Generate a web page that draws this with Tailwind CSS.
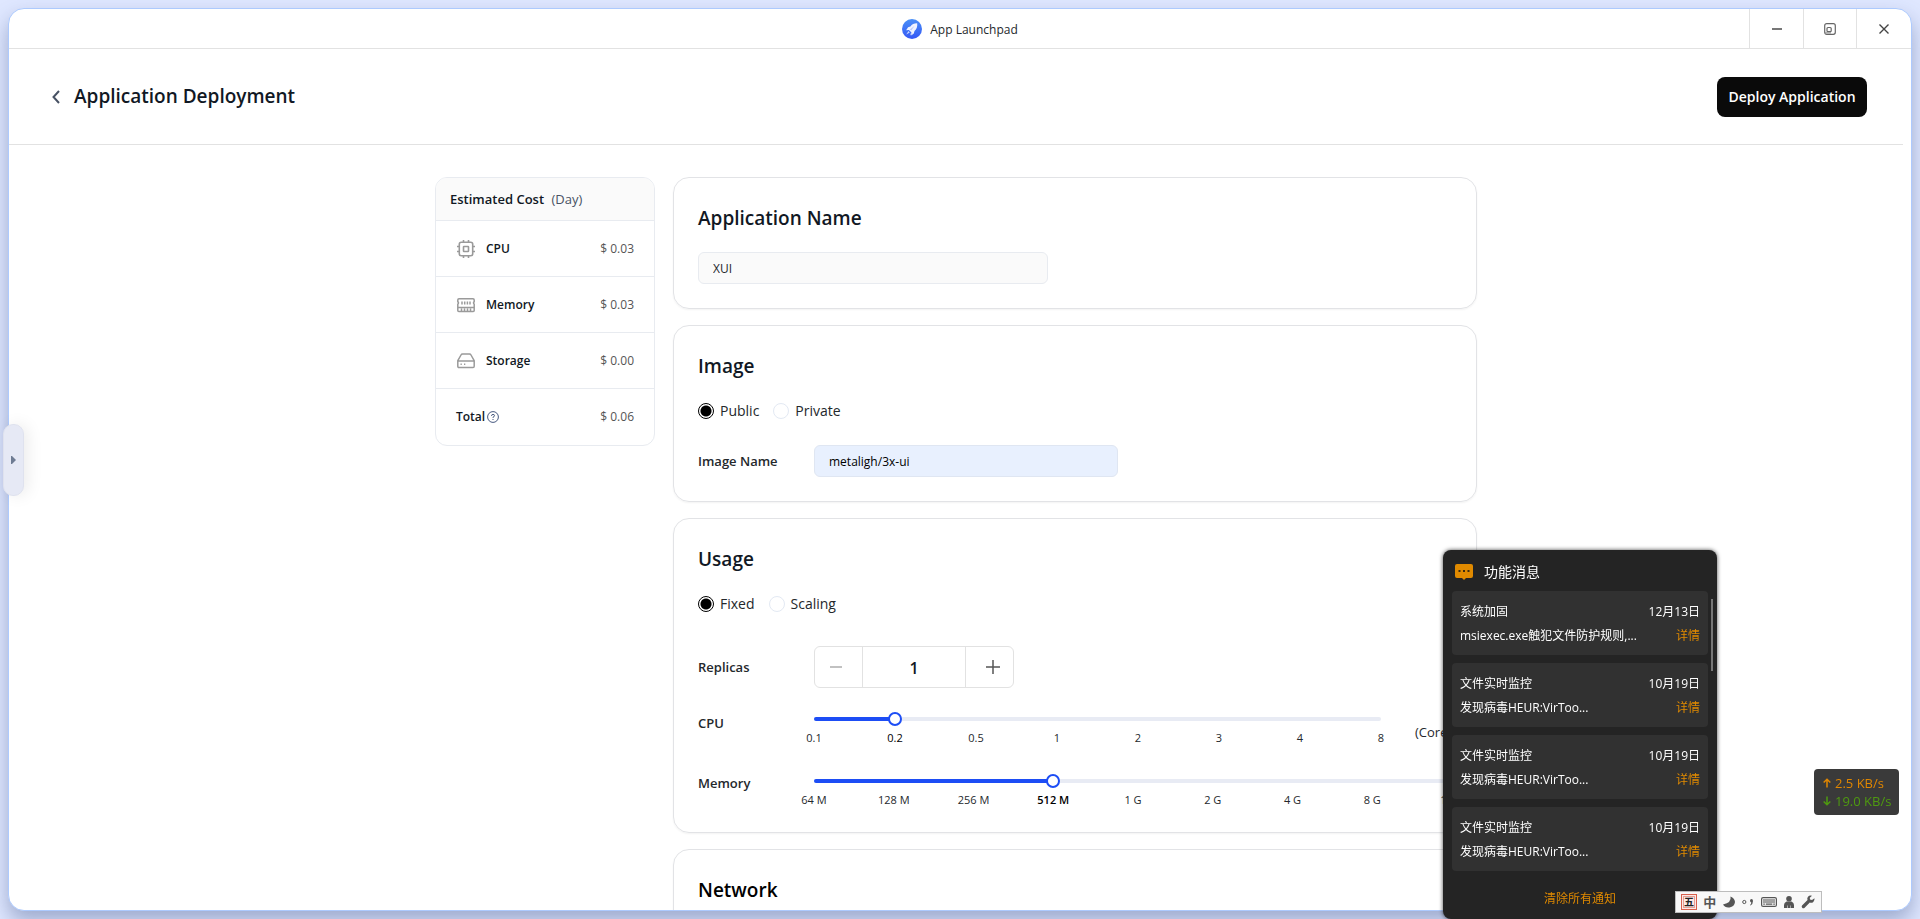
<!DOCTYPE html>
<html lang="en">
<head>
<meta charset="utf-8">
<meta name="viewport" content="width=device-width, initial-scale=1">
<title>App Launchpad</title>
<script src="https://cdn.jsdelivr.net/npm/@tailwindcss/browser@4"></script>
</head>
<body class="h-screen overflow-hidden bg-[#dfe7ff] p-2 font-['Open_Sans','Noto_Sans','Noto_Sans_CJK_SC',sans-serif] text-[#111824]">

<div class="flex h-full flex-col overflow-hidden rounded-2xl border border-[#adcafe] bg-white shadow-[0_10px_20px_rgba(60,80,130,0.4)]">
  <!-- window title bar -->
  <div class="grid h-10 shrink-0 grid-cols-[1fr_auto_1fr] border-b border-[#e2e2e2]">
    <span></span>
    <div class="flex items-center gap-2 text-xs text-[#24282c]">
      <svg class="size-5" viewBox="0 0 20 20" aria-hidden="true">
        <defs><linearGradient id="lg" x1="0" y1="0" x2="0" y2="1"><stop offset="0" stop-color="#4a90f7"/><stop offset="1" stop-color="#3457f5"/></linearGradient></defs>
        <circle cx="10" cy="10" r="10" fill="url(#lg)"/>
        <path d="M15.200 4.200c-3-.1-5.200 1-6.800 3.300l-2.300.7-2 3 2.800-.2 2.600 2.500-.3 2.900 2.600-1.900.7-2.400c2.200-1.800 3.100-4.500 2.700-7.800z" fill="#eef3ff"/>
        <path d="M6.500 12 4.200 15.500l3.600-1.900zM9 13.600l-.8 3 2.600-2.300z" fill="#c8d6ff"/>
        <path d="M8 10.600l4.600-3.900-3.400 4.900z" fill="#b5c6fb"/>
      </svg>
      <span class="pt-0.5">App Launchpad</span>
    </div>
    <div class="flex justify-end text-[#555]">
      <button type="button" aria-label="Minimize" class="flex w-[54px] items-center justify-center border-l border-[#e2e2e2]">
        <svg class="h-3 w-3" viewBox="0 0 12 12"><path d="M1 6h10" stroke="#777" stroke-width="2" /></svg>
      </button>
      <button type="button" aria-label="Restore" class="flex w-[53px] items-center justify-center border-l border-[#e2e2e2]">
        <svg class="h-3 w-3" viewBox="0 0 12 12" fill="none" stroke="#666" stroke-width="1.200"><rect x=".7" y=".7" width="10.600" height="10.600" rx="2"/><rect x="3" y="4.500" width="4.200" height="4.200" rx="1"/><path d="M1 9.800h6" stroke="#999"/></svg>
      </button>
      <button type="button" aria-label="Close" class="flex w-[55px] items-center justify-center border-l border-[#e2e2e2]">
        <svg class="h-3 w-3" viewBox="0 0 12 12"><path d="M1.500 1.500l9 9M10.500 1.500l-9 9" stroke="#444" stroke-width="1.400"/></svg>
      </button>
    </div>
  </div>

  <div class="mr-2 flex min-h-0 flex-1 flex-col overflow-hidden">
    <!-- page header -->
    <header class="flex h-24 shrink-0 items-center justify-between border-b border-[#e2e2e2] pr-9 pl-[35px]">
      <div class="flex items-center gap-1.5">
        <button type="button" aria-label="Back" class="flex size-6 items-center justify-center">
          <svg class="h-4 w-3" viewBox="0 0 12 16" fill="none"><path d="M9 2 3.500 8 9 14" stroke="#485264" stroke-width="2"/></svg>
        </button>
        <h1 class="text-[19px] font-semibold">Application Deployment</h1>
      </div>
      <button type="button" class="h-10 w-[150px] rounded-lg bg-[#0a0a0a] text-sm font-semibold whitespace-nowrap text-white">Deploy Application</button>
    </header>

    <main class="min-h-0 flex-1 overflow-hidden pt-8">
      <div class="mx-auto flex max-w-[1042px] items-start gap-[18px]">
        <!-- cost table -->
        <table aria-label="Estimated cost per day" class="w-[220px] shrink-0 border-separate border-spacing-0 overflow-hidden rounded-xl border border-[#e8ebf0] text-xs">
          <thead>
            <tr><th colspan="2" class="h-[43px] border-b border-[#e8ebf0] bg-[#fafafa] px-3.5 pt-0.5 text-left text-[13px] font-semibold">Estimated Cost <span class="ml-1 font-normal text-[#485264]">(Day)</span></th></tr>
          </thead>
          <tbody>
            <tr>
              <th scope="row" class="h-14 border-b border-[#e8ebf0] pl-[21px] text-left font-semibold">
                <span class="flex items-center gap-[11px]">
                  <svg class="h-[18px] w-[18px]" viewBox="0 0 18 18" fill="none" stroke="#9a9a9a" stroke-width="1.600"><rect x="2.300" y="2.300" width="13.400" height="13.400" rx="2"/><rect x="6.500" y="6.500" width="5" height="5" rx=".5"/><path d="M6.500 0v2.300M11.500 0v2.300M6.500 15.700V18M11.500 15.700V18M0 6.500h2.300M0 11.500h2.300M15.700 6.500H18M15.700 11.500H18"/></svg>CPU</span>
              </th>
              <td class="border-b border-[#e8ebf0] pr-5 text-right text-[#555]">$ 0.03</td>
            </tr>
            <tr>
              <th scope="row" class="h-14 border-b border-[#e8ebf0] pl-[21px] text-left font-semibold">
                <span class="flex items-center gap-[11px]">
                  <svg class="h-[18px] w-[18px]" viewBox="0 0 18 18" fill="none" stroke="#9a9a9a" stroke-width="1.500"><path d="M.8 5.800V4q0-1.200 1.200-1.200h14q1.200 0 1.200 1.200v1.800q-1.400.6 0 2.400v6.300q0 1-1 1H1.800q-1 0-1-1V8.200q1.400-1.800 0-2.400zM.8 11.500h16.400M5 5.500v3M7.700 5.500v3M10.400 5.500v3M13 5.500v3M4.500 12.500v3M7.500 12.500v3M10.500 12.500v3M13.500 12.500v3"/></svg>Memory</span>
              </th>
              <td class="border-b border-[#e8ebf0] pr-5 text-right text-[#555]">$ 0.03</td>
            </tr>
            <tr>
              <th scope="row" class="h-14 border-b border-[#e8ebf0] pl-[21px] text-left font-semibold">
                <span class="flex items-center gap-[11px]">
                  <svg class="h-[18px] w-[18px]" viewBox="0 0 18 18" fill="none" stroke="#9a9a9a" stroke-width="1.500"><path d="M.8 8.700 4 3q.5-.9 1.500-.9h7q1 0 1.500.9l3.200 5.700v5.600q0 1.300-1.200 1.300H2Q.8 15.600.8 14.300zM.8 8.900h16.400"/><path d="M3.500 12.300h1.300M7 12.300h1.300"/></svg>Storage</span>
              </th>
              <td class="border-b border-[#e8ebf0] pr-5 text-right text-[#555]">$ 0.00</td>
            </tr>
            <tr>
              <th scope="row" class="h-14 pl-5 text-left font-semibold">
                <span class="flex items-center gap-0.5">Total
                  <svg class="size-3" viewBox="0 0 12 12" fill="none" stroke="#485a80"><circle cx="6" cy="6" r="5.400"/><path d="M4.500 4.900q0-1.500 1.500-1.500t1.500 1.300q0 .9-1.500 1.500v.7M6 8v1"/></svg></span>
              </th>
              <td class="pr-5 text-right text-[#555]">$ 0.06</td>
            </tr>
          </tbody>
        </table>

        <form class="flex min-w-0 flex-1 flex-col gap-4">
          <section class="rounded-2xl border border-[#e2e3e6] p-6 shadow-xs">
            <h2 class="mb-[19px] pt-px text-[19px] leading-[30px] font-semibold"><label for="app">Application Name</label></h2>
            <input id="app" type="text" value="XUI" class="block h-8 w-[350px] rounded-md border border-[#e8ebf0] bg-[#fafafa] px-3.5 text-xs text-[#24282c]">
          </section>

          <section class="rounded-2xl border border-[#e2e3e6] p-6 shadow-xs">
            <h2 class="mb-[19px] pt-px text-[19px] leading-[30px] font-semibold">Image</h2>
            <div class="mb-6 flex h-[21px] items-center gap-3.5 text-sm text-[#24282c]">
              <label class="flex items-center gap-1.5"><input type="radio" name="img" checked class="size-4 appearance-none rounded-full border border-[#e3e9f3] checked:border-black checked:bg-[radial-gradient(circle,black_5px,white_6px)]">Public</label>
              <label class="flex items-center gap-1.5"><input type="radio" name="img" class="size-4 appearance-none rounded-full border border-[#e3e9f3] checked:border-black checked:bg-[radial-gradient(circle,black_5px,white_6px)]">Private</label>
            </div>
            <div class="flex items-center">
              <label for="image" class="w-[116px] shrink-0 pt-0.5 text-[13px] font-semibold text-[#24282c]">Image Name</label>
              <input id="image" type="text" value="metaligh/3x-ui" class="h-8 w-[304px] rounded-md border border-[#dfe6f2] bg-[#e8f0fe] px-3.5 text-xs text-black">
            </div>
          </section>

          <section class="rounded-2xl border border-[#e2e3e6] p-6 shadow-xs">
            <h2 class="mb-[19px] pt-px text-[19px] leading-[30px] font-semibold">Usage</h2>
            <div class="mb-8 flex h-[21px] items-center gap-3.5 text-sm text-[#24282c]">
              <label class="flex items-center gap-1.5"><input type="radio" name="use" checked class="size-4 appearance-none rounded-full border border-[#e3e9f3] checked:border-black checked:bg-[radial-gradient(circle,black_5px,white_6px)]">Fixed</label>
              <label class="flex items-center gap-1.5"><input type="radio" name="use" class="size-4 appearance-none rounded-full border border-[#e3e9f3] checked:border-black checked:bg-[radial-gradient(circle,black_5px,white_6px)]">Scaling</label>
            </div>
            <div class="flex items-center">
              <label for="rep" class="w-[116px] shrink-0 pt-0.5 text-[13px] font-semibold text-[#24282c]">Replicas</label>
              <div class="flex h-[42px] w-[200px] rounded-md border border-[#e2e2e2]">
                <button type="button" aria-label="Decrease" class="flex w-12 items-center justify-center border-r border-[#e2e2e2] pr-1.5"><svg class="h-3.5 w-3.5" viewBox="0 0 14 14"><path d="M1 7h12" stroke="#c1c1c1" stroke-width="2"/></svg></button>
                <input id="rep" type="text" inputmode="numeric" value="1" class="min-w-0 flex-1 pt-0.5 text-center text-base font-semibold">
                <button type="button" aria-label="Increase" class="flex w-12 items-center justify-center border-l border-[#e2e2e2] pl-1.5"><svg class="h-3.5 w-3.5" viewBox="0 0 14 14"><path d="M0 7h14M7 0v14" stroke="#555" stroke-width="1.500"/></svg></button>
              </div>
            </div>

            <div class="mt-[29px] flex h-9">
              <label for="cpu" class="-mt-1 w-[116px] shrink-0 text-[13px] leading-5 font-semibold text-[#24282c]">CPU</label>
              <div class="min-w-0 flex-1">
                <div class="relative h-1 rounded-full bg-[#e8ebf4]">
                  <div class="h-1 rounded-full bg-[#1d4df5]" style="width:14.286%"></div>
                  <input id="cpu" type="range" min="0" max="7" value="1" class="absolute -top-[5px] -left-[7px] h-3.5 w-[calc(100%+14px)] appearance-none bg-transparent [&::-webkit-slider-thumb]:size-3.5 [&::-webkit-slider-thumb]:appearance-none [&::-webkit-slider-thumb]:rounded-full [&::-webkit-slider-thumb]:border-2 [&::-webkit-slider-thumb]:border-[#1d4df5] [&::-webkit-slider-thumb]:bg-white">
                </div>
                <div class="mt-2 flex justify-between text-[11px] leading-[18px] text-[#24282c]">
                  <span class="flex w-0 justify-center whitespace-nowrap">0.1</span><span class="flex w-0 justify-center whitespace-nowrap text-black">0.2</span><span class="flex w-0 justify-center whitespace-nowrap">0.5</span><span class="flex w-0 justify-center whitespace-nowrap">1</span><span class="flex w-0 justify-center whitespace-nowrap">2</span><span class="flex w-0 justify-center whitespace-nowrap">3</span><span class="flex w-0 justify-center whitespace-nowrap">4</span><span class="flex w-0 justify-center whitespace-nowrap">8</span>
                </div>
              </div>
              <span class="ml-[34px] w-[37px] pt-1.5 text-[13px] whitespace-nowrap text-[#24282c]">(Core)</span>
            </div>

            <div class="mt-[26px] flex h-[29px]">
              <label for="mem" class="-mt-1 w-[116px] shrink-0 text-[13px] leading-4 font-semibold text-[#24282c]">Memory</label>
              <div class="min-w-0 flex-1">
                <div class="relative h-1 rounded-full bg-[#e8ebf4]">
                  <div class="h-1 rounded-full bg-[#1d4df5]" style="width:37.5%"></div>
                  <input id="mem" type="range" min="0" max="8" value="3" class="absolute -top-[5px] -left-[7px] h-3.5 w-[calc(100%+14px)] appearance-none bg-transparent [&::-webkit-slider-thumb]:size-3.5 [&::-webkit-slider-thumb]:appearance-none [&::-webkit-slider-thumb]:rounded-full [&::-webkit-slider-thumb]:border-2 [&::-webkit-slider-thumb]:border-[#1d4df5] [&::-webkit-slider-thumb]:bg-white">
                </div>
                <div class="mt-2 flex justify-between text-[11px] leading-[18px] text-[#24282c]">
                  <span class="flex w-0 justify-center whitespace-nowrap">64 M</span><span class="flex w-0 justify-center whitespace-nowrap">128 M</span><span class="flex w-0 justify-center whitespace-nowrap">256 M</span><span class="flex w-0 justify-center font-semibold whitespace-nowrap text-black">512 M</span><span class="flex w-0 justify-center whitespace-nowrap">1 G</span><span class="flex w-0 justify-center whitespace-nowrap">2 G</span><span class="flex w-0 justify-center whitespace-nowrap">4 G</span><span class="flex w-0 justify-center whitespace-nowrap">8 G</span><span class="flex w-0 justify-center whitespace-nowrap">16 G</span>
                </div>
              </div>
            </div>
          </section>

          <section class="rounded-2xl border border-[#e2e3e6] p-6 shadow-xs">
            <h2 class="mb-[19px] pt-px text-[19px] leading-[30px] font-semibold text-black">Network</h2>
          </section>
        </form>
      </div>
    </main>
  </div>
</div>

<!-- side drawer handle -->
<button type="button" aria-label="Open drawer" class="fixed top-[424px] left-[3px] flex h-[72px] w-[21px] items-center justify-center rounded-[10px] border border-[#dfe2ee] bg-[#e6e9f5] shadow-[4px_0_16px_rgba(0,0,0,0.08)]">
  <svg class="h-2 w-[5px]" viewBox="0 0 5 8"><path d="M0 0h1l4 4-4 4H0z" fill="#6f7c93"/></svg>
</button>

<!-- network speed -->
<div class="fixed right-[21px] bottom-[104px] flex h-[46px] w-[85px] flex-col justify-center rounded-sm bg-[#3a3a3a] pl-[9px] text-[13px] leading-[18px]">
  <div class="flex items-center gap-1 text-[#e08600]"><svg class="h-2.5 w-2" viewBox="0 0 8 10" fill="none" stroke="currentColor" stroke-width="1.500"><path d="M4 9.500V1.500M.7 4.500 4 1.200l3.300 3.300"/></svg>2.5 KB/s</div>
  <div class="flex items-center gap-1 text-[#4f9a10]"><svg class="h-2.5 w-2" viewBox="0 0 8 10" fill="none" stroke="currentColor" stroke-width="1.500"><path d="M4 .5v8M.7 5.500 4 8.800l3.300-3.300"/></svg>19.0 KB/s</div>
</div>

<!-- notifications -->
<aside class="fixed right-[203px] bottom-0 flex w-[274px] flex-col rounded-lg bg-[#242424] px-[9px] text-xs text-white shadow-[0_0_4px_rgba(0,0,0,0.7)]">
  <h2 class="flex h-[41px] items-center gap-[11px] pt-0.5 pl-[3px] text-sm">
    <svg class="h-4 w-[18px]" viewBox="0 0 18 16"><path d="M2 0h14q2 0 2 2v10q0 2-2 2h-5l-2 2-2-2H2q-2 0-2-2V2q0-2 2-2z" fill="#e08a00"/><path d="M3.500 6h2v2h-2zM8 6h2v2H8zM12.500 6h2v2h-2z" fill="#3a2a10"/></svg>功能消息</h2>
  <ul class="flex flex-col gap-2">
    <li class="grid h-16 grid-cols-[1fr_auto] content-center rounded bg-[#313131] px-2 pt-0.5 leading-6"><span>系统加固</span><time>12月13日</time><span>msiexec.exe触犯文件防护规则,...</span><a href="#" class="text-right text-[#e08a00]">详情</a></li>
    <li class="grid h-16 grid-cols-[1fr_auto] content-center rounded bg-[#313131] px-2 pt-0.5 leading-6"><span>文件实时监控</span><time>10月19日</time><span>发现病毒HEUR:VirToo...</span><a href="#" class="text-right text-[#e08a00]">详情</a></li>
    <li class="grid h-16 grid-cols-[1fr_auto] content-center rounded bg-[#313131] px-2 pt-0.5 leading-6"><span>文件实时监控</span><time>10月19日</time><span>发现病毒HEUR:VirToo...</span><a href="#" class="text-right text-[#e08a00]">详情</a></li>
    <li class="grid h-16 grid-cols-[1fr_auto] content-center rounded bg-[#313131] px-2 pt-0.5 leading-6"><span>文件实时监控</span><time>10月19日</time><span>发现病毒HEUR:VirToo...</span><a href="#" class="text-right text-[#e08a00]">详情</a></li>
  </ul>
  <button type="button" class="h-12 pt-2 text-[#e08a00]">清除所有通知</button>
  <div class="absolute top-[49px] right-1 h-[72px] w-0.5 bg-[#777]"></div>
</aside>

<!-- input method bar -->
<div class="fixed right-[98px] bottom-1.5 flex h-[22px] w-[147px] items-center justify-between border border-[#bdbdbd] bg-[#f8f8f8] pr-1.5 pl-[5px] text-[#555]">
  <span class="flex size-4 items-center justify-center border border-[#d9604c] bg-[#fbe9e6] p-px text-[10px] leading-none font-bold text-[#222] outline-1 -outline-offset-3 outline-[#e8a094]">五</span>
  <span class="text-[13px] leading-none font-bold">中</span>
  <svg class="size-3.5" viewBox="0 0 14 14"><path d="M8.500 1.500q1.300 6-7.500 8 2 3.500 6.500 3 5-1 5.500-5.500-.3-4-4.500-5.500z" fill="#555"/></svg>
  <svg class="h-2.5 w-3" viewBox="0 0 12 10"><circle cx="2.300" cy="5" r="1.600" fill="none" stroke="#555"/><path d="M8 3.500q0-1.500 1.500-1.500T11 4q0 3-2.500 4.500L8 8q1.300-1 1.300-2.500Q8 5 8 3.500z" fill="#555"/></svg>
  <svg class="h-2.5 w-4" viewBox="0 0 16 10"><rect x=".6" y=".6" width="14.800" height="8.800" rx="1.500" fill="#f8f8f8" stroke="#555" stroke-width="1.200"/><path d="M2.300 3h11.500M2.300 5h11.500" stroke="#555" stroke-width="1.300" stroke-dasharray="1.400 .6"/><path d="M2.300 7.200h1.500M4.800 7.200h6.500M12.300 7.200h1.500" stroke="#555" stroke-width="1.300"/></svg>
  <svg class="size-3" viewBox="0 0 12 12" fill="#555"><circle cx="6" cy="2.800" r="2.800"/><path d="M3.500 5.500h5Q11 6.500 11 9v3H8V9.500H7.500V12h-3V9.500H4V12H1V9q0-2.500 2.500-3.500z"/></svg>
  <svg class="size-3.5" viewBox="0 0 14 14"><path d="M13.500 3.200 11 5 9 4.500 8.800 2.800 11 .8Q8.500 0 7 1.700 5.800 3.200 6.500 5L1 10.600q-.8 1.200.2 2.200t2.200.2L8.800 7.600q2 .6 3.500-.7 1.500-1.500 1.200-3.700z" fill="#555"/></svg>
</div>
</body>
</html>
